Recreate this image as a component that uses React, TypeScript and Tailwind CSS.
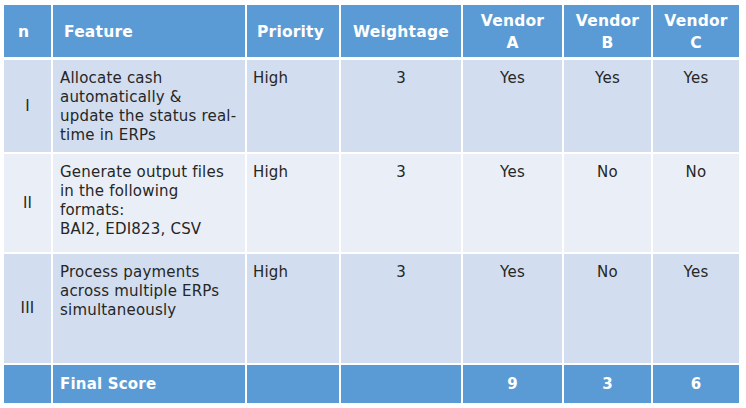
const cols = 'grid grid-cols-[47px_192px_92px_120px_99px_87px_86px] gap-x-[2px]';

type Row = {
  n: string;
  feature: string[];
  priority: string;
  weight: string;
  a: string;
  b: string;
  c: string;
  bg: string;
  h: string;
};

const rows: Row[] = [
  {
    n: 'I',
    feature: ['Allocate cash', 'automatically &', 'update the status real-', 'time in ERPs'],
    priority: 'High',
    weight: '3',
    a: 'Yes',
    b: 'Yes',
    c: 'Yes',
    bg: 'bg-[#d2deef]',
    h: 'h-[92px]',
  },
  {
    n: 'II',
    feature: ['Generate output files', 'in the following', 'formats:', 'BAI2, EDI823, CSV'],
    priority: 'High',
    weight: '3',
    a: 'Yes',
    b: 'No',
    c: 'No',
    bg: 'bg-[#eaeff7]',
    h: 'h-[98px]',
  },
  {
    n: 'III',
    feature: ['Process payments', 'across multiple ERPs', 'simultaneously'],
    priority: 'High',
    weight: '3',
    a: 'Yes',
    b: 'No',
    c: 'Yes',
    bg: 'bg-[#d2deef]',
    h: 'h-[109px]',
  },
];

export default function App() {
  return (
    <div className="w-[746px] h-[408px] bg-white pl-[4px] pt-[5px] font-['DejaVu_Sans',sans-serif] text-[15px] leading-[19px] text-[#262626] tracking-[0.2px]">
      <div className="flex flex-col gap-y-[2px] w-[735px]">
        {/* header */}
        <div className={`${cols} h-[52px] mb-[1px] text-white font-bold text-[15.5px]`}>
          <div className="bg-[#5b9bd5] flex items-center pl-[14px] pt-[2px]">n</div>
          <div className="bg-[#5b9bd5] flex items-center pl-[11px] pt-[2px]">Feature</div>
          <div className="bg-[#5b9bd5] flex items-center pl-[10px] pt-[2px]">Priority</div>
          <div className="bg-[#5b9bd5] flex items-center justify-center pt-[2px]">Weightage</div>
          <div className="bg-[#5b9bd5] flex items-center justify-center text-center leading-[22px] pt-[2px]">
            Vendor
            <br />A
          </div>
          <div className="bg-[#5b9bd5] flex items-center justify-center text-center leading-[22px] pt-[2px]">
            Vendor
            <br />B
          </div>
          <div className="bg-[#5b9bd5] flex items-center justify-center text-center leading-[22px] pt-[2px]">
            Vendor
            <br />C
          </div>
        </div>

        {rows.map((r) => (
          <div key={r.n} className={`${cols} ${r.h}`}>
            <div className={`${r.bg} flex items-center justify-center`}>{r.n}</div>
            <div className={`${r.bg} pt-[9px] pl-[7px] whitespace-nowrap`}>
              {r.feature.map((line, i) => (
                <div key={i}>{line}</div>
              ))}
            </div>
            <div className={`${r.bg} pt-[9px] pl-[6px]`}>{r.priority}</div>
            <div className={`${r.bg} pt-[9px] text-center`}>{r.weight}</div>
            <div className={`${r.bg} pt-[9px] text-center`}>{r.a}</div>
            <div className={`${r.bg} pt-[9px] text-center`}>{r.b}</div>
            <div className={`${r.bg} pt-[9px] text-center`}>{r.c}</div>
          </div>
        ))}

        {/* footer */}
        <div className={`${cols} h-[38px] text-white font-bold`}>
          <div className="bg-[#5b9bd5]" />
          <div className="bg-[#5b9bd5] flex items-center pl-[7px]">Final Score</div>
          <div className="bg-[#5b9bd5]" />
          <div className="bg-[#5b9bd5]" />
          <div className="bg-[#5b9bd5] flex items-center justify-center">9</div>
          <div className="bg-[#5b9bd5] flex items-center justify-center">3</div>
          <div className="bg-[#5b9bd5] flex items-center justify-center">6</div>
        </div>
      </div>
    </div>
  );
}
